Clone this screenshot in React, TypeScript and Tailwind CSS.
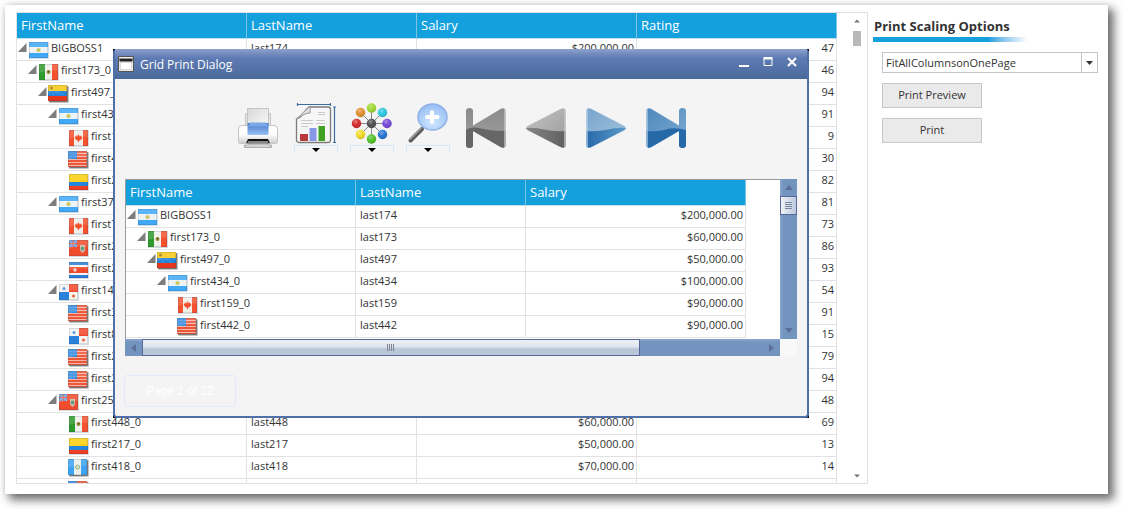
import React from "react";

type Country = "AR" | "MX" | "VE" | "CA" | "US" | "CO" | "BM" | "CR" | "PA" | "GT";

interface Person {
  name: string;
  country: Country;
  level: number;
  parent?: boolean;
  last: string;
  salary: string;
  rating: number | "";
}

const people: Person[] = [
  { name: "BIGBOSS1", country: "AR", level: 0, parent: true, last: "last174", salary: "$200,000.00", rating: 47 },
  { name: "first173_0", country: "MX", level: 1, parent: true, last: "last173", salary: "$60,000.00", rating: 46 },
  { name: "first497_0", country: "VE", level: 2, parent: true, last: "last497", salary: "$50,000.00", rating: 94 },
  { name: "first434_0", country: "AR", level: 3, parent: true, last: "last434", salary: "$100,000.00", rating: 91 },
  { name: "first159_0", country: "CA", level: 4, last: "last159", salary: "$90,000.00", rating: 9 },
  { name: "first442_0", country: "US", level: 4, last: "last442", salary: "$90,000.00", rating: 30 },
  { name: "first222_0", country: "CO", level: 4, last: "last222", salary: "$80,000.00", rating: 82 },
  { name: "first370_0", country: "AR", level: 3, parent: true, last: "last370", salary: "$60,000.00", rating: 81 },
  { name: "first74_0", country: "CA", level: 4, last: "last74", salary: "$70,000.00", rating: 73 },
  { name: "first231_0", country: "BM", level: 4, last: "last231", salary: "$50,000.00", rating: 86 },
  { name: "first258_0", country: "CR", level: 4, last: "last258", salary: "$90,000.00", rating: 93 },
  { name: "first145_0", country: "PA", level: 3, parent: true, last: "last145", salary: "$60,000.00", rating: 54 },
  { name: "first312_0", country: "US", level: 4, last: "last312", salary: "$80,000.00", rating: 91 },
  { name: "first86_0", country: "PA", level: 4, last: "last86", salary: "$70,000.00", rating: 15 },
  { name: "first265_0", country: "US", level: 4, last: "last265", salary: "$90,000.00", rating: 79 },
  { name: "first281_0", country: "US", level: 4, last: "last281", salary: "$50,000.00", rating: 94 },
  { name: "first254_0", country: "BM", level: 3, parent: true, last: "last254", salary: "$60,000.00", rating: 48 },
  { name: "first448_0", country: "MX", level: 4, last: "last448", salary: "$60,000.00", rating: 69 },
  { name: "first217_0", country: "CO", level: 4, last: "last217", salary: "$50,000.00", rating: 13 },
  { name: "first418_0", country: "GT", level: 4, last: "last418", salary: "$70,000.00", rating: 14 },
  { name: "", country: "US", level: 4, last: "", salary: "", rating: "" },
];

const indents = ["pl-px", "pl-[11px]", "pl-[21px]", "pl-[31px]", "pl-[41px]"];

function FlagArt({ country }: { country: Country }) {
  switch (country) {
    case "AR":
      return (
        <>
          <path fill="#3fa9f8" d="M0 0h19v16H0z" />
          <path fill="#eef2f2" d="M0 5h19v6H0z" />
          <circle cx="9.500" cy="8" r="2.200" fill="#c9cf86" />
          <circle cx="9.500" cy="8" r="1" fill="#dcb62f" />
        </>
      );
    case "MX":
      return (
        <>
          <path fill="#f1f1ec" d="M0 0h19v16H0z" />
          <path fill="#2f9a2c" d="M0 0h6v16H0z" />
          <path fill="#f4512f" d="M13 0h6v16h-6z" />
          <circle cx="9.500" cy="8" r="2" fill="#9a8b3c" />
          <circle cx="9.500" cy="7.500" r="1" fill="#6d5a1c" />
        </>
      );
    case "VE":
      return (
        <>
          <path fill="#e9371d" d="M0 0h19v16H0z" />
          <path fill="#f7c912" d="M0 0h19v6H0z" />
          <path fill="#2484dc" d="M0 6h19v5H0z" />
          <path fill="none" stroke="#8cc7f5" strokeDasharray="1 2" d="M5 9.500q4.500-4 9 0" />
          <circle cx="3.500" cy="3" r="1.500" fill="#9a7a24" />
        </>
      );
    case "CA":
      return (
        <>
          <path fill="#f0eee9" d="M0 0h19v16H0z" />
          <path fill="#f4512f" d="M0 0h5v16H0zM14 0h5v16h-5z" />
          <path fill="#f4512f" d="m9.500 4 1.200 2 1.300-.500 1.500 2.500-2.500 2.500h-3L5.500 8 7 5.500l1.300.500zM9 10h1v2H9z" />
        </>
      );
    case "US":
      return (
        <>
          <path fill="#ee5638" d="M0 0h19v16H0z" />
          <path stroke="#f6b5a6" d="M0 2.500h19M0 5.500h19M0 8.500h19M0 11.500h19M0 14.500h19" />
          <path fill="#3289dc" d="M0 0h9v8H0z" />
          <path stroke="#5da3e6" strokeDasharray="1 1" d="M1 2.500h7M1 5.500h7" />
        </>
      );
    case "CO":
      return (
        <>
          <path fill="#fbd00d" d="M0 0h19v8H0z" />
          <path fill="#2686df" d="M0 8h19v4H0z" />
          <path fill="#ee3f23" d="M0 12h19v4H0z" />
        </>
      );
    case "BM":
      return (
        <>
          <path fill="#f04c2d" d="M0 0h19v16H0z" />
          <path fill="#4b93e0" d="M0 0h8v7H0z" />
          <path stroke="#b9b3cf" d="m0 0 8 7M8 0 0 7" />
          <path stroke="#ee5a44" d="M4 0v7M0 3.500h8" />
          <path fill="#c9b9ac" d="M11 5h5v5q-1 2.500-2.500 3-1.500-.500-2.500-3z" />
          <circle cx="13.500" cy="8.500" r="1.700" fill="#5f9a78" />
        </>
      );
    case "CR":
      return (
        <>
          <path fill="#2b7ed4" d="M0 0h19v16H0z" />
          <path fill="#f3f3f1" d="M0 3h19v10H0z" />
          <path fill="#f0482b" d="M0 5h19v6H0z" />
          <circle cx="6" cy="8" r="1.700" fill="#e9d8cf" />
        </>
      );
    case "PA":
      return (
        <>
          <path fill="#f4f3f0" d="M0 0h19v16H0z" />
          <path fill="#f0482b" d="M10 0h9v8h-9z" />
          <path fill="#2b82dc" d="M0 8h10v8H0z" />
          <circle cx="5" cy="4.500" r="1.500" fill="#3b91e6" />
          <circle cx="14.500" cy="12" r="1.500" fill="#f0603f" />
        </>
      );
    default:
      return (
        <>
          <path fill="#3da3f2" d="M0 0h19v16H0z" />
          <path fill="#eceee8" d="M6 0h7v16H6z" />
          <circle cx="9.500" cy="8" r="2" fill="#dfe6d5" stroke="#8cae74" />
        </>
      );
  }
}

function Flag({ country }: { country: Country }) {
  const raised = country === "VE" || country === "US" || country === "GT";
  return (
    <svg
      viewBox="0 0 22 18"
      className={raised ? "mt-[2px] -ml-px h-[18px] w-[22px] shrink-0" : "mt-[3px] h-[18px] w-[22px] shrink-0"}
      aria-hidden="true"
    >
      {raised ? (
        <>
          <rect x="1" y="1" width="20" height="17" rx="1" fill="#5a5a5a" opacity=".35" />
          <rect x="1" y="1" width="19" height="16" rx="1" fill="#444" opacity=".6" />
        </>
      ) : (
        <path fill="#d3dbe0" d="M0 0h20v17H0z" />
      )}
      <FlagArt country={country} />
      <path fill="#fff" opacity=".14" d="M0 0h19v7Q10 5 0 9z" />
      <path fill="none" stroke="#234" strokeOpacity=".14" d="M.500.500h18v15H.500z" />
    </svg>
  );
}

function NameCell({ person }: { person: Person }) {
  const raised = person.country === "VE" || person.country === "US" || person.country === "GT";
  return (
    <div className={`flex h-[21px] items-start overflow-hidden ${indents[person.level]}`}>
      <svg viewBox="0 0 9 9" className="mt-1 mr-[2px] h-[9px] w-[9px] shrink-0" aria-hidden="true">
        {person.parent && <path fill="#7d7d7d" d="M8.500 0v9H0z" />}
      </svg>
      <Flag country={person.country} />
      <span className={raised ? "ml-px leading-[17px]" : "leading-[17px]"}>{person.name}</span>
    </div>
  );
}

function TreeTable({ rows, rating }: { rows: Person[]; rating?: boolean }) {
  const head = "h-[26px] border-r border-b border-[#c9dfea] border-r-[#7cc3e8] bg-[#149fdd] px-1 text-left align-top text-[13px] leading-[24px] font-normal text-white";
  const cell = "h-[22px] border-r border-b border-[#e2e2e2] p-0 align-top leading-[17px]";
  return (
    <table className={rating ? "w-[820px] table-fixed border-separate border-spacing-0" : "w-[620px] table-fixed border-separate border-spacing-0"}>
      <colgroup>
        <col className="w-[230px]" />
        <col className="w-[170px]" />
        <col className="w-[220px]" />
        {rating && <col className="w-[200px]" />}
      </colgroup>
      <thead>
        <tr>
          <th className={head}>FirstName</th>
          <th className={head}>LastName</th>
          <th className={head}>Salary</th>
          {rating && <th className={head}>Rating</th>}
        </tr>
      </thead>
      <tbody>
        {rows.map((p, i) => (
          <tr key={i}>
            <td className={cell}><NameCell person={p} /></td>
            <td className={`${cell} pl-1`}>{p.last}</td>
            <td className={`${cell} pr-0.5 text-right`}>{p.salary}</td>
            {rating && <td className={`${cell} pr-0.5 text-right`}>{p.rating}</td>}
          </tr>
        ))}
      </tbody>
    </table>
  );
}

function Defs() {
  return (
    <svg className="absolute h-0 w-0" aria-hidden="true">
      <defs>
        <linearGradient id="greyTop" x1="0" y1="0" x2="0" y2="1">
          <stop offset="0" stopColor="#8a8a8a" /><stop offset="1" stopColor="#a2a2a2" />
        </linearGradient>
        <linearGradient id="paleTop" x1="0" y1="0" x2="1" y2="1">
          <stop offset="0" stopColor="#c6c6c6" /><stop offset="1" stopColor="#999" />
        </linearGradient>
        <linearGradient id="greyLow" x1="0" y1="0" x2="1" y2="0">
          <stop offset="0" stopColor="#868686" /><stop offset="1" stopColor="#5f5f5f" />
        </linearGradient>
        <linearGradient id="skyTop" x1="0" y1="0" x2="1" y2="1">
          <stop offset="0" stopColor="#77a4cd" /><stop offset="1" stopColor="#a6c5de" />
        </linearGradient>
        <linearGradient id="blueTop" x1="0" y1="0" x2="1" y2="1">
          <stop offset="0" stopColor="#4d87bc" /><stop offset="1" stopColor="#80aed2" />
        </linearGradient>
        <linearGradient id="blueLow" x1="0" y1="0" x2="1" y2="0">
          <stop offset="0" stopColor="#2768a9" /><stop offset="1" stopColor="#5b9bca" />
        </linearGradient>
        <linearGradient id="paper" x1="0" y1="0" x2="1" y2="1">
          <stop offset="0" stopColor="#d8d8d8" /><stop offset="1" stopColor="#fafafa" />
        </linearGradient>
        <linearGradient id="body" x1="0" y1="0" x2="0" y2="1">
          <stop offset="0" stopColor="#fff" /><stop offset=".5" stopColor="#fdfdfd" /><stop offset="1" stopColor="#cdcdcd" />
        </linearGradient>
        <linearGradient id="tray" x1="0" y1="0" x2="0" y2="1">
          <stop offset="0" stopColor="#3f74cb" /><stop offset="1" stopColor="#9dc2f2" />
        </linearGradient>
        <radialGradient id="lens" cx=".5" cy=".7" r=".7">
          <stop offset="0" stopColor="#cfe8ff" /><stop offset="1" stopColor="#98bdf5" />
        </radialGradient>
        <radialGradient id="ball" cx=".4" cy=".3" r=".75">
          <stop offset="0" stopColor="#fff" stopOpacity=".4" /><stop offset=".5" stopColor="#fff" stopOpacity=".05" /><stop offset="1" stopColor="#000" stopOpacity=".22" />
        </radialGradient>
      </defs>
    </svg>
  );
}

const iconSize = "h-10 w-10";

function PrinterIcon() {
  return (
    <svg viewBox="0 0 40 40" className={iconSize} aria-hidden="true">
      <path fill="#e4e4e4" stroke="#c6c6c6" d="M7.500 5.500h25V20h-25z" />
      <path fill="url(#paper)" stroke="#c4c4c4" d="M9.500.500h21V20h-21z" />
      <path fill="url(#body)" stroke="#c4c4c4" d="M4 17.500h32q3.500 0 3.500 4v12q0 2-2 2h-35q-2 0-2-2v-12q0-4 3.500-4z" />
      <path fill="url(#tray)" d="M9.500 15h21v12h-21z" />
      <path fill="#7ba6e8" d="M12 14.500h16l2 4H10z" />
      <path fill="#111" d="M10 31h20l2 4H8z" />
      <path fill="#858585" d="M10 33h20l1 3H9z" />
      <path fill="#d4d4d4" stroke="#ababab" d="M6.500 37q4 .500 5-1h17q1 1.500 5 1v2.500h-27z" />
    </svg>
  );
}

function ReportIcon() {
  return (
    <svg viewBox="0 0 44 42" className="h-[42px] w-11" aria-hidden="true">
      <path stroke="#3b6ea2" strokeWidth="1.200" d="M3 1.500h34M3.500 0v3M36.500 0v3M40.500 4v36M39 4h3M39 39.500h3" />
      <path fill="#f6f6f6" stroke="#7b7b7b" strokeWidth="1.300" d="M15 4h19q2.500 0 2.500 2.500V37q0 2.500-2.500 2.500H5Q2.500 39.500 2.500 37V16Q6 15 9 11q3-5 6-7z" />
      <path fill="#dedede" stroke="#8a8a8a" strokeWidth=".8" d="M2.500 16 15 4q2 0 1 6-3 0-6 1.500T2.500 16z" />
      <path stroke="#cacaca" strokeWidth="1.200" d="M24 9.500h7M24 11.500h7M7 17.500h12M22 17.500h9M7 20.500h12M22 20.500h9M7 23.500h7" />
      <path fill="#b83a3c" d="M6 31h8v7H6z" />
      <path fill="#8798e6" d="M15.500 25h7v13h-7z" />
      <path fill="#3fa321" d="M24.500 23h6.500v15h-6.500z" />
    </svg>
  );
}

const balls: [number, number, string][] = [
  [21.500, 5, "#9ad628"], [32.500, 9.500, "#22c4de"], [37, 20.500, "#6f3fd4"], [32.500, 31.500, "#1d6fd0"],
  [21.500, 36, "#45be1e"], [10.500, 31.500, "#f2d81c"], [6.500, 20.500, "#d21f22"], [10.500, 9.500, "#e08a26"],
  [21.500, 20.500, "#474747"],
];

function PaletteIcon() {
  return (
    <svg viewBox="0 0 44 42" className="h-[42px] w-11" aria-hidden="true">
      <path stroke="#8a8a8a" d="M21.500 5v31M6.500 20.500H37M10.500 9.500l22 22M32.500 9.500l-22 22" />
      {balls.map(([x, y, c]) => (
        <g key={c}>
          <circle cx={x} cy={y} r="4.700" fill={c} />
          <circle cx={x} cy={y} r="4.700" fill="url(#ball)" />
        </g>
      ))}
    </svg>
  );
}

function ZoomIcon() {
  return (
    <svg viewBox="0 0 44 42" className="h-[42px] w-11" aria-hidden="true">
      <path stroke="#5a5a5a" strokeWidth="4" strokeLinecap="round" d="M4.500 37.500 16 26" />
      <path stroke="#9b9b9b" strokeWidth="1.500" strokeLinecap="round" d="M4 36.500 15 25.500" />
      <ellipse cx="26.500" cy="14" rx="14.500" ry="13" fill="url(#lens)" stroke="#8fb1e6" strokeWidth="1.500" />
      <path stroke="#fff" strokeWidth="4" strokeLinecap="round" d="M26 9v10M21 14h10.500" />
    </svg>
  );
}

function NavIcon({ kind }: { kind: "first" | "prev" | "next" | "last" }) {
  const back = kind === "first" || kind === "prev";
  const bar = kind === "first" || kind === "last";
  const left = "M35 .800Q39.500-.800 39.500 3v34q0 3.800-4.500 2.200";
  const shape = kind === "first"
    ? `${left}L7 23V37q0 3-3.500 3T0 37V3q0-3 3.500-3T7 3v14.500z`
    : kind === "prev"
      ? `${left}L1.500 22Q-1 20 1.500 18z`
      : kind === "next"
        ? "M5 .800Q.500-.800.500 3v34q0 3.800 4.500 2.200L38.500 22q2.500-2 0-4z"
        : "M5 .800Q.500-.800.500 3v34q0 3.800 4.500 2.200L33 23V37q0 3 3.500 3T40 37V3q0-3-3.500-3T33 3v14.500z";
  const top = kind === "first" ? "url(#greyTop)" : kind === "prev" ? "url(#paleTop)" : kind === "next" ? "url(#skyTop)" : "url(#blueTop)";
  const low = kind === "first" ? "#666" : kind === "prev" ? "url(#greyLow)" : kind === "next" ? "url(#blueLow)" : "#2768a9";
  const wave = bar && back
    ? "M0 22Q5 18 15 20.500T40 23V40H0z"
    : back ? "M0 20q8-1 18 1.500T40 23v17H0z" : bar ? "M0 23q12 1 20-1.500T40 22v18H0z" : "M0 23q12 1 22-1.500T40 20v20H0z";
  return (
    <svg viewBox="0 0 40 40" className={iconSize} aria-hidden="true">
      <clipPath id={`clip-${kind}`}><path d={shape} /></clipPath>
      <path d={shape} fill={top} />
      <path d={wave} fill={low} clipPath={`url(#clip-${kind})`} />
      {back
        ? <path fill="#c4c4c4" d="M38.300 0H40v40h-1.700z" clipPath={`url(#clip-${kind})`} />
        : <path fill="#a9cbe4" d="M0 0h1.700v40H0z" clipPath={`url(#clip-${kind})`} />}
    </svg>
  );
}

function MenuTool({ label, children }: { label: string; children: React.ReactNode }) {
  return (
    <button type="button" aria-label={label} className="flex w-11 flex-col">
      {children}
      <span className="flex h-2 w-full items-center justify-center border border-b-0 border-[#d3e6f7]">
        <svg viewBox="0 0 8 4" className="h-1 w-2" aria-hidden="true"><path d="M0 0h8L4 4z" /></svg>
      </span>
    </button>
  );
}

function PrintDialog() {
  return (
    <section role="dialog" aria-label="Grid Print Dialog" className="absolute top-11 left-[108px] w-[696px] bg-black">
      <div className="rounded-[4px] border-x-2 border-b-2 border-[#4f70a9] bg-[#f4f4f4]">
        <header className="flex h-[30px] items-center bg-linear-to-b from-[#8ea1ca] via-[#5e7bb4] via-30% to-[#4b6a9b] pr-[7px] pl-[3px] text-white">
          <svg viewBox="0 0 16 16" className="h-4 w-4" aria-hidden="true">
            <path fill="#e9e9e9" stroke="#555" d="M.500.500h15v15H.500z" />
            <path fill="#222" d="M1.500 2h13v3.500h-13z" />
            <path stroke="#999" d="M2 2.500h12" />
            <path fill="#d9d9d9" d="M2 6h12v8H2z" />
            <path fill="#fff" d="M3 7h10v6H3z" />
          </svg>
          <h2 className="mt-0.5 ml-1.5 flex-1 text-xs">Grid Print Dialog</h2>
          <div className="flex items-start gap-2 pb-1">
            <button type="button" aria-label="Minimize" className="p-0.5">
              <svg viewBox="0 0 12 12" className="h-3 w-3" aria-hidden="true"><path fill="#fff" d="M1 9h10v2H1z" /></svg>
            </button>
            <button type="button" aria-label="Maximize" className="p-0.5">
              <svg viewBox="0 0 12 12" className="h-3 w-3" aria-hidden="true"><path fill="none" stroke="#fff" d="M2 2.500h8v7H2z" /><path fill="#fff" d="M1.500 1h9v2.500h-9z" /></svg>
            </button>
            <button type="button" aria-label="Close" className="p-0.5">
              <svg viewBox="0 0 12 12" className="h-3 w-3" aria-hidden="true"><path stroke="#fff" strokeWidth="2.200" d="m2 2 8 8M10 2l-8 8" /></svg>
            </button>
          </div>
        </header>

        <div className="flex h-[100px] items-start pt-6 pl-[123px]">
          <button type="button" aria-label="Print" className="mt-[5px] mr-4"><PrinterIcon /></button>
          <div className="mr-4 flex gap-3">
            <MenuTool label="Page setup"><ReportIcon /></MenuTool>
            <MenuTool label="Theme"><PaletteIcon /></MenuTool>
            <MenuTool label="Zoom"><ZoomIcon /></MenuTool>
          </div>
          <div className="mt-[5px] flex gap-5">
            <button type="button" aria-label="First page"><NavIcon kind="first" /></button>
            <button type="button" aria-label="Previous page"><NavIcon kind="prev" /></button>
            <button type="button" aria-label="Next page"><NavIcon kind="next" /></button>
            <button type="button" aria-label="Last page"><NavIcon kind="last" /></button>
          </div>
        </div>

        <div className="mx-2.5">
          <div className="flex h-40">
            <div className="min-w-0 flex-1 overflow-hidden border-t border-l border-[#9a9a9a] bg-white">
              <TreeTable rows={people.slice(0, 6)} />
            </div>
            <div className="flex w-[17px] flex-col items-center bg-linear-to-r from-[#87a5cf] to-[#7494c0] to-20%">
              <svg viewBox="0 0 8 5" className="mt-1.5 mb-1.5 h-[5px] w-2" aria-hidden="true"><path fill="#5d6f99" d="M0 5h8L4 0z" /></svg>
              <div className="flex h-[19px] w-full flex-col items-center justify-center border border-[#56699a] bg-linear-to-r from-[#eff2f7] to-[#bccadf]">
                <svg viewBox="0 0 7 8" className="h-2 w-[7px]" aria-hidden="true"><path stroke="#7c879c" d="M0 .500h7M0 2.500h7M0 4.500h7M0 6.500h7" /></svg>
              </div>
              <svg viewBox="0 0 8 5" className="mt-auto mb-1.5 h-[5px] w-2" aria-hidden="true"><path fill="#5d6f99" d="M0 0h8L4 5z" /></svg>
            </div>
          </div>
          <div className="flex h-[17px] bg-[#f8f8f8]">
            <div className="flex flex-1 items-center bg-linear-to-b from-[#87a5cf] to-[#7494c0] to-20%">
              <svg viewBox="0 0 5 8" className="mx-1.5 h-2 w-[5px]" aria-hidden="true"><path fill="#5d6f99" d="M5 0v8L0 4z" /></svg>
              <div className="flex h-full w-[498px] items-center justify-center border border-[#56699a] bg-linear-to-b from-[#edf0f5] via-[#dfe5ee] via-45% to-[#b9c6d8] to-60%">
                <svg viewBox="0 0 8 7" className="h-[7px] w-2" aria-hidden="true"><path stroke="#7c8492" d="M.500 0v7M2.500 0v7M4.500 0v7M6.500 0v7" /></svg>
              </div>
              <svg viewBox="0 0 5 8" className="mr-1.5 ml-auto h-2 w-[5px]" aria-hidden="true"><path fill="#5d6f99" d="M0 0v8l5-4z" /></svg>
            </div>
            <div className="w-[17px]" />
          </div>
        </div>

        <button type="button" className="mt-[19px] mb-[9px] ml-[9px] block h-8 w-28 rounded-[3px] border border-[#e2ecf8] font-['Liberation_Sans',Arial,sans-serif] text-xs text-white">
          Page 1 of 22
        </button>
      </div>
    </section>
  );
}

export default function App() {
  const action = "h-[25px] w-[100px] border border-[#c8c8c8] bg-[#eaeaea] pb-px";
  return (
    <div className="h-screen overflow-hidden bg-white pt-[5px] pr-[15px] pb-[15px] pl-[5px] font-['Open_Sans','Noto_Sans',sans-serif] text-[11px] text-[#333]">
      <Defs />
      <main className="relative flex h-full bg-white pt-[7px] pb-[10px] pl-[11px] shadow-[5px_5px_9px_1px_rgba(0,0,0,0.55),0_0_6px_rgba(0,0,0,0.12)]">
        <div className="flex min-w-0 flex-1 overflow-hidden border border-[#dfe1e3]">
          <div className="min-w-0 flex-1 overflow-hidden">
            <TreeTable rows={people} rating />
          </div>
          <div className="flex w-5 flex-col items-center pt-1.5 pb-[5px]">
            <svg viewBox="0 0 6 3" className="mb-2 h-1 w-1.5" aria-hidden="true"><path fill="#777" d="M0 3h6L3 0z" /></svg>
            <div className="h-[15px] w-2 bg-[#b9b9b9]" />
            <svg viewBox="0 0 6 3" className="mt-auto h-1 w-1.5" aria-hidden="true"><path fill="#777" d="M0 0h6L3 3z" /></svg>
          </div>
        </div>

        <aside className="w-[240px] shrink-0 pr-2.5 pl-[5px]">
          <h1 className="mt-1 pl-px text-[13px] leading-[21px] font-bold">Print Scaling Options</h1>
          <div className="h-[5px] w-[154px] bg-linear-to-r from-[#149fdd] from-75% to-white" />
          <div className="relative mt-2.5 ml-[9px]">
            <label htmlFor="scaling" className="sr-only">Print Scaling Options</label>
            <select id="scaling" className="block h-[21px] w-full appearance-none border border-[#c4c4c4] bg-white pl-[3px] leading-[17px]">
              <option>FitAllColumnsonOnePage</option>
            </select>
            <span className="pointer-events-none absolute inset-y-0 right-0 flex w-[17px] items-center justify-center border border-[#c4c4c4]">
              <svg viewBox="0 0 7 4" className="h-1 w-[7px]" aria-hidden="true"><path fill="#333" d="M0 0h7L3.500 4z" /></svg>
            </span>
          </div>
          <div className="mt-2.5 ml-[9px] flex flex-col items-start gap-2.5">
            <button type="button" className={action}>Print Preview</button>
            <button type="button" className={action}>Print</button>
          </div>
        </aside>
        <PrintDialog />
      </main>
    </div>
  );
}
